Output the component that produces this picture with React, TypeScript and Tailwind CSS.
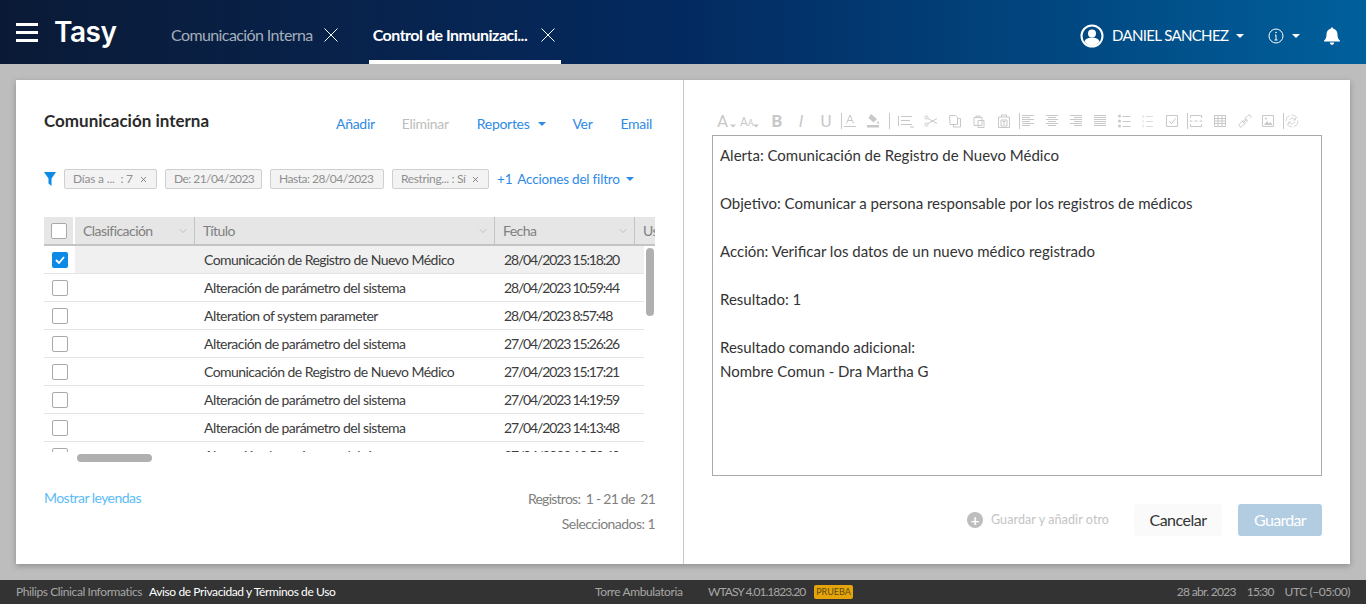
import { ChevronDown, X } from "lucide-react";

const rows = [
  ["Comunicación de Registro de Nuevo Médico", "28/04/2023 15:18:20"],
  ["Alteración de parámetro del sistema", "28/04/2023 10:59:44"],
  ["Alteration of system parameter", "28/04/2023 8:57:48"],
  ["Alteración de parámetro del sistema", "27/04/2023 15:26:26"],
  ["Comunicación de Registro de Nuevo Médico", "27/04/2023 15:17:21"],
  ["Alteración de parámetro del sistema", "27/04/2023 14:19:59"],
  ["Alteración de parámetro del sistema", "27/04/2023 14:13:48"],
  ["Alteración de parámetro del sistema", "27/04/2023 13:53:40"],
];

const Caret = ({ className }: { className: string }) => (
  <span
    className={`inline-block w-0 h-0 border-x-[4px] border-x-transparent border-t-[4px] ${className}`}
  />
);

const CloseX = ({ className }: { className: string }) => (
  <svg width="14" height="14" viewBox="0 0 14 14" fill="none" stroke="currentColor" className={className}>
    <path d="M0.500 0.500l13 13M13.500 0.500l-13 13" />
  </svg>
);

const Chip = ({ text, close, className }: { text: string; close?: boolean; className: string }) => (
  <div
    className={`h-[20px] flex items-center justify-between px-[8px] bg-[#f3f3f3] border border-[#cfcfcf] rounded-[2px] text-[12px] text-[#8f8f8f] whitespace-nowrap ${className}`}
  >
    <span>{text}</span>
    {close && <X size={9} strokeWidth={2} className="text-[#666]" />}
  </div>
);

const Hcell = ({ text, className }: { text: string; className: string }) => (
  <div className={`h-full flex items-center justify-between pl-[8px] pr-[5px] border-r border-[#c4c4c4] shrink-0 ${className}`}>
    <span>{text}</span>
    <ChevronDown size={12} strokeWidth={1} className="text-[#999]" />
  </div>
);

const Sep = ({ className }: { className: string }) => <span className={`w-px h-[16px] bg-[#c9c9c9] ${className}`} />;

// the editor icons are thin line drawings, so they are drawn by hand
const Ico = ({ d, className, w = 14 }: { d: string; className: string; w?: number }) => (
  <svg width={w} height="14" viewBox={`0 0 ${w} 14`} fill="none" stroke="currentColor" className={className}>
    <path d={d} />
  </svg>
);

const Toolbar = () => (
  <div className="h-[30px] pt-[2px] flex items-center text-[#c8c8c8] pl-[5px] font-['Roboto',sans-serif]">
    <span className="text-[17px] leading-none w-[12px]">A</span>
    <Caret className="border-t-[#c8c8c8] scale-75 mt-[9px]" />
    <span className="ml-[3px] w-[12px] leading-none whitespace-nowrap">
      <span className="text-[12px]">A</span>
      <span className="text-[9px]">A</span>
    </span>
    <Caret className="border-t-[#c8c8c8] scale-75 mt-[9px]" />
    <span className="ml-[10px] w-[14px] text-center text-[17px] font-bold leading-none">B</span>
    <span className="ml-[10px] w-[14px] text-center text-[17px] italic leading-none">I</span>
    <span className="ml-[11px] w-[14px] text-center text-[17px] leading-none">U</span>
    <Sep className="ml-[8px]" />
    <Ico d="M3.500 9.500 7 1l3.500 8.500M5 6.500h4M1 12.500h12" className="ml-[1px]" />
    <svg width="14" height="14" viewBox="0 0 14 14" className="ml-[9px]" fill="currentColor">
      <path d="M5 0l6 5-3.500 3.500-5-4.500zM12 7l1.500 2.500h-3zM1 11h12v2.500H1z" />
    </svg>
    <Sep className="ml-[9px]" />
    <Ico w={18} d="M1.500 2v10M4 2.500h11M4 6.500h9M4 10.500h11M13 13h4" className="ml-[7px]" />
    <Ico d="M1 3.500a1.500 1.500 0 1 0 3 0 1.500 1.500 0 1 0-3 0M1 10.500a1.500 1.500 0 1 0 3 0 1.500 1.500 0 1 0-3 0M4 4.500l9 5M4 9.500l9-5" className="ml-[9px]" />
    <Ico d="M1.500 1.500h6l2 2v7h-7.500zM9.500 4.500h3v8.500h-7v-2.500" className="ml-[10px]" />
    <Ico d="M2 3.500h8v8H2zM4 3.500V2h4v1.500M6 6.500h6v7H6z" className="ml-[10px]" />
    <Ico d="M1.500 3h11v10.500h-11zM4.500 3V1h5v2M4 6h6v6H4zM7 7.500v3.500M5.500 7.500h3" className="ml-[11px]" />
    <Sep className="ml-[8px]" />
    <Ico d="M1 1.500h12M1 3.500h8M1 5.500h12M1 7.500h8M1 9.500h12M1 11.500h8" className="ml-[1px]" />
    <Ico d="M1 1.500h12M3 3.500h8M1 5.500h12M3 7.500h8M1 9.500h12M3 11.500h8" className="ml-[10px]" />
    <Ico d="M1 1.500h12M5 3.500h8M1 5.500h12M5 7.500h8M1 9.500h12M5 11.500h8" className="ml-[10px]" />
    <Ico d="M1 1.500h12M1 3.500h12M1 5.500h12M1 7.500h12M1 9.500h12M1 11.500h12" className="ml-[10px]" />
    <svg width="14" height="14" viewBox="0 0 14 14" className="ml-[10px]" fill="none" stroke="currentColor">
      <circle cx="2.500" cy="2" r="1.500" fill="currentColor" stroke="none" />
      <circle cx="2.500" cy="7" r="1.500" fill="currentColor" stroke="none" />
      <circle cx="2.500" cy="12" r="1.500" fill="currentColor" stroke="none" />
      <path d="M5.500 2.500h8M5.500 7.500h8M5.500 12.500h8" />
    </svg>
    <Ico d="M2 1v3M2 6v2.500M2 10.500v3M5 2.500h7M5 7.500h7M5 12.500h7" className="ml-[10px] text-[#dcdcdc]" />
    <Ico d="M1.500 1.500h11v11h-11zM4 7l2.500 2.500L10.500 4.500" className="ml-[10px]" />
    <Sep className="ml-[8px]" />
    <Ico d="M1.500 4V1.500h11V4M1.500 10v2.500h11V10M0.500 7h3M5.500 7h3M10.500 7h3" className="ml-[1px]" />
    <svg width="14" height="14" viewBox="0 0 14 14" className="ml-[10px]" fill="none" stroke="currentColor">
      <path d="M1.500 1.500h11v11h-11zM1.500 4.500h11M1.500 7h11M1.500 9.500h11M5 1.500v11M9 1.500v11" />
    </svg>
    <Ico d="M2 9.500l3-3M1.500 10a1.700 1.700 0 0 0 2.500 2.500l2.500-2.500a1.700 1.700 0 0 0-2.500-2.500M12.500 4a1.700 1.700 0 0 0-2.500-2.500L7.500 4A1.700 1.700 0 0 0 10 6.500M5 9l4-4" className="ml-[11px]" />
    <svg width="14" height="14" viewBox="0 0 14 14" className="ml-[9px]" fill="none" stroke="currentColor">
      <path d="M1.500 1.500h11v11h-11z" />
      <path d="M3 11l3-4 2 2.500 1.500-1.500 2 3z" fill="currentColor" stroke="none" />
      <circle cx="5" cy="4.500" r="1" fill="currentColor" stroke="none" />
    </svg>
    <Sep className="ml-[8px]" />
    <svg width="14" height="16" viewBox="0 0 14 16" className="ml-[1px] text-[#d6d6d6]" fill="none" stroke="currentColor">
      <circle cx="7" cy="8" r="6" strokeDasharray="7 2" />
      <path d="M4.500 7a3 3 0 0 1 5-1l1 1M9.500 9a3 3 0 0 1-5 1l-1-1M10.500 4.500V7H8M3.500 11.500V9H6" />
    </svg>
  </div>
);

export default function App() {
  return (
    <div className="w-[1366px] h-[604px] overflow-hidden flex flex-col bg-[#bdbdbd] font-['Lato',sans-serif] text-[14px]">
      {/* top bar */}
      <header className="h-[64px] shrink-0 flex items-stretch text-white bg-gradient-to-r from-[#0a1a36] via-[#032a60] to-[#00609c] whitespace-nowrap">
        <div className="w-[22px] ml-[16px] flex flex-col justify-center gap-[5px]">
          <span className="h-[3px] bg-white" />
          <span className="h-[3px] bg-white" />
          <span className="h-[3px] bg-white" />
        </div>
        <div className="ml-[16px] w-[117px] flex items-center text-[28px] font-semibold font-['Inter',sans-serif] leading-none tracking-[-0.5px]">
          Tasy
        </div>
        <div className="flex items-center pt-[6px] text-[16px] tracking-[-0.6px] text-[#a4aebb]">
          Comunicación Interna
          <CloseX className="text-white ml-[11px]" />
        </div>
        <div className="ml-[31px] w-[192px] pl-[4px] flex items-center border-b-[4px] border-white pt-[10px] text-[16px] font-bold tracking-[-0.5px]">
          <span className="w-[168px]">Control de Inmunizaci...</span>
          <CloseX className="" />
        </div>
        <div className="ml-auto flex items-center pr-[25px] pt-[7px]">
          <svg width="24" height="24" viewBox="0 0 24 24" fill="none">
            <circle cx="12" cy="12" r="10.500" stroke="white" strokeWidth="2" />
            <circle cx="12" cy="9.500" r="4" fill="white" />
            <path d="M4.500 17.500c1-3 4-4 7.500-4s6.500 1 7.500 4A10 10 0 0 1 12 22a10 10 0 0 1-7.500-4.500z" fill="white" />
          </svg>
          <span className="ml-[8px] w-[116px] text-[15px] tracking-[-0.65px]">DANIEL SANCHEZ</span>
          <Caret className="border-t-white ml-[8px]" />
          <svg width="16" height="16" viewBox="0 0 16 16" className="ml-[24px]" fill="none" stroke="white">
            <circle cx="8" cy="8" r="7" />
            <path d="M8 7v5M6.500 12h3M7 7h1" />
            <circle cx="8" cy="4.500" r="0.800" fill="white" stroke="none" />
          </svg>
          <Caret className="border-t-white ml-[8px]" />
          <svg width="18" height="20" viewBox="0 0 18 20" className="ml-[23px]" fill="white">
            <path d="M9 1.500c.8 0 1.300.5 1.300 1.200C13 3.300 14.500 5.500 14.500 8.500c0 3 .7 4.500 2.500 6.200v.8H1v-.8c1.800-1.700 2.500-3.200 2.500-6.200 0-3 1.500-5.200 4.200-5.800 0-.7.500-1.200 1.300-1.200zM6.800 16.500h4.400C11 18 10.100 18.800 9 18.800S7 18 6.800 16.500z" />
          </svg>
        </div>
      </header>

      <main className="flex-1 min-h-0 pt-[16px] px-[16px] pb-[16px]">
        <div className="h-full bg-white flex shadow-[0_2px_6px_rgba(0,0,0,0.25)]">
          {/* left panel */}
          <section className="w-[668px] shrink-0 border-r border-[#c9c9c9] pl-[28px] pr-[28px] flex flex-col">
            <div className="mt-[28px] h-[32px] flex items-start justify-between">
              <h1 className="text-[17px] font-bold text-[#2a2a2a] leading-[26px]">Comunicación interna</h1>
              <nav className="flex items-center text-[14px] tracking-[-0.3px] text-[#2e8ae6] pt-[6px] pr-[3px] leading-[20px]">
                <span>Añadir</span>
                <span className="ml-[27px] text-[#bdbdbd]">Eliminar</span>
                <span className="ml-[28px]">Reportes</span>
                <Caret className="border-t-[#2e8ae6] ml-[9px]" />
                <span className="ml-[26px]">Ver</span>
                <span className="ml-[28px]">Email</span>
              </nav>
            </div>
            <div className="mt-[29px] h-[20px] flex items-center">
              <svg width="12" height="14" viewBox="0 0 12 14" fill="#0d8ae6" className="mr-[8px]">
                <path d="M0 0h12L7.500 6.500V14L4.500 11.500V6.500z" />
              </svg>
              <Chip text={"Días a ...\u00a0\u00a0: 7"} close className="w-[93px] tracking-[-0.2px]" />
              <Chip text="De: 21/04/2023" className="w-[97px] ml-[8px] tracking-[-0.55px]" />
              <Chip text="Hasta: 28/04/2023" className="w-[114px] ml-[8px] tracking-[-0.5px]" />
              <Chip text="Restring... : Sí" close className="w-[97px] ml-[8px] tracking-[-0.35px]" />
              <span className="ml-[8px] text-[13.500px] tracking-[-0.2px] text-[#2e8ae6]">+1</span>
              <span className="ml-[5px] text-[13.500px] tracking-[-0.2px] text-[#2e8ae6]">Acciones del filtro</span>
              <Caret className="border-t-[#2e8ae6] ml-[6px]" />
            </div>

            {/* grid */}
            <div className="relative mt-[28px] h-[245px] w-[611px]">
              <div className="h-[235px] overflow-hidden">
                <div className="h-[29px] flex items-center bg-[#e6e6e6] border-b-[2px] border-[#c4c4c4] text-[14px] tracking-[-0.55px] text-[#808080] whitespace-nowrap">
                  <div className="w-[31px] h-full shrink-0 flex items-center justify-center border-r-[2px] border-white">
                    <span className="w-[16px] h-[16px] bg-white border border-[#a9a9a9] rounded-[2px]" />
                  </div>
                  <Hcell text="Clasificación" className="w-[120px]" />
                  <Hcell text="Título" className="w-[300px]" />
                  <Hcell text="Fecha" className="w-[140px]" />
                  <span className="pl-[8px]">Usuario</span>
                </div>
                {rows.map((r, i) => (
                  <div key={i} className="h-[28px] flex w-[600px] text-[14px] text-[#3c3c3c] whitespace-nowrap">
                    <div className="w-[31px] shrink-0 flex items-center justify-center border-b border-[#e4e4e4]">
                      {i === 0 ? (
                        <span className="w-[16px] h-[16px] bg-[#0d8ae6] rounded-[2px] flex items-center justify-center">
                          <svg width="10" height="8" viewBox="0 0 10 8" fill="none" stroke="white" strokeWidth="1.800">
                            <path d="M1 4l3 3 5-6" />
                          </svg>
                        </span>
                      ) : (
                        <span className="w-[16px] h-[16px] bg-white border border-[#a9a9a9] rounded-[2px]" />
                      )}
                    </div>
                    <div className={`flex-1 flex items-center border-b border-[#e4e4e4] ${i === 0 ? "bg-[#f0f0f0]" : ""}`}>
                      <span className="ml-[129px] w-[300px] tracking-[-0.55px]">{r[0]}</span>
                      <span className="tracking-[-1.15px]">{r[1]}</span>
                    </div>
                  </div>
                ))}
              </div>
              {/* scrollbars */}
              <span className="absolute right-[1px] top-[31px] w-[8px] h-[68px] rounded-[4px] bg-[#b0b0b0]" />
              <span className="absolute left-[33px] bottom-0 w-[75px] h-[8px] rounded-[4px] bg-[#b0b0b0]" />
            </div>

            <div className="mt-[23px] flex justify-between">
              <span className="text-[14px] tracking-[-0.55px] text-[#5cbcf5] pt-[3px] leading-[20px]">Mostrar leyendas</span>
              <div className="text-right text-[14px] tracking-[-0.55px] text-[#808080] leading-[25px] pt-[1px]">
                <div className="tracking-[-0.75px]">Registros: &nbsp;1 - 21 de &nbsp;21</div>
                <div>Seleccionados: 1</div>
              </div>
            </div>
          </section>

          {/* right panel */}
          <section className="flex-1 pl-[28px] pr-[28px] pt-[25px] flex flex-col">
            <Toolbar />
            <div className="h-[341px] border border-[#aaaaaa] pl-[7px] pr-[8px] pt-[7px] text-[15px] leading-[24px] text-[#333]">
              <p>Alerta: Comunicación de Registro de Nuevo Médico</p>
              <p className="mt-[24px]">Objetivo: Comunicar a persona responsable por los registros de médicos</p>
              <p className="mt-[24px]">Acción: Verificar los datos de un nuevo médico registrado</p>
              <p className="mt-[24px]">Resultado: 1</p>
              <p className="mt-[24px]">Resultado comando adicional:</p>
              <p>Nombre Comun - Dra Martha G</p>
            </div>
            <div className="mt-[28px] flex items-center justify-end">
              <span className="w-[16px] h-[16px] rounded-full bg-[#bdbdbd] flex items-center justify-center text-white text-[15px] font-bold leading-none">+</span>
              <span className="ml-[8px] w-[119px] text-[12.500px] tracking-[0.1px] text-[#c4c4c4] whitespace-nowrap">Guardar y añadir otro</span>
              <span className="ml-[24px] w-[88px] h-[32px] pb-[1px] flex items-center justify-center rounded-[3px] bg-[#fafafa] text-[16px] tracking-[-0.5px] text-[#333]">Cancelar</span>
              <span className="ml-[16px] w-[84px] h-[32px] pb-[1px] flex items-center justify-center rounded-[3px] bg-[#b2cce2] text-[16px] tracking-[-0.7px] text-white">Guardar</span>
            </div>
          </section>
        </div>
      </main>

      {/* footer */}
      <footer className="h-[24px] shrink-0 bg-[#333333] px-[16px] flex items-center text-[12px] tracking-[-0.4px] text-[#a6a6a6] whitespace-nowrap">
        <span className="w-[127px]">Philips Clinical Informatics</span>
        <span className="ml-[6px] w-[186px] text-white">Aviso de Privacidad y Términos de Uso</span>
        <span className="ml-[260px] w-[86px]">Torre Ambulatoria</span>
        <span className="ml-[27px] w-[95px] tracking-[-0.95px]">WTASY 4.01.1823.20</span>
        <span className="ml-[11px] w-[39px] h-[14px] text-center rounded-[2px] bg-[#e5a50a] text-[#5e4a10] text-[9px] tracking-normal leading-[14px]">PRUEBA</span>
        <span className="ml-auto tracking-[-0.7px]">28 abr. 2023</span>
        <span className="ml-[11px] tracking-[-0.8px]">15:30</span>
        <span className="ml-[11px] tracking-[-0.45px]">UTC (−05:00)</span>
      </footer>
    </div>
  );
}
